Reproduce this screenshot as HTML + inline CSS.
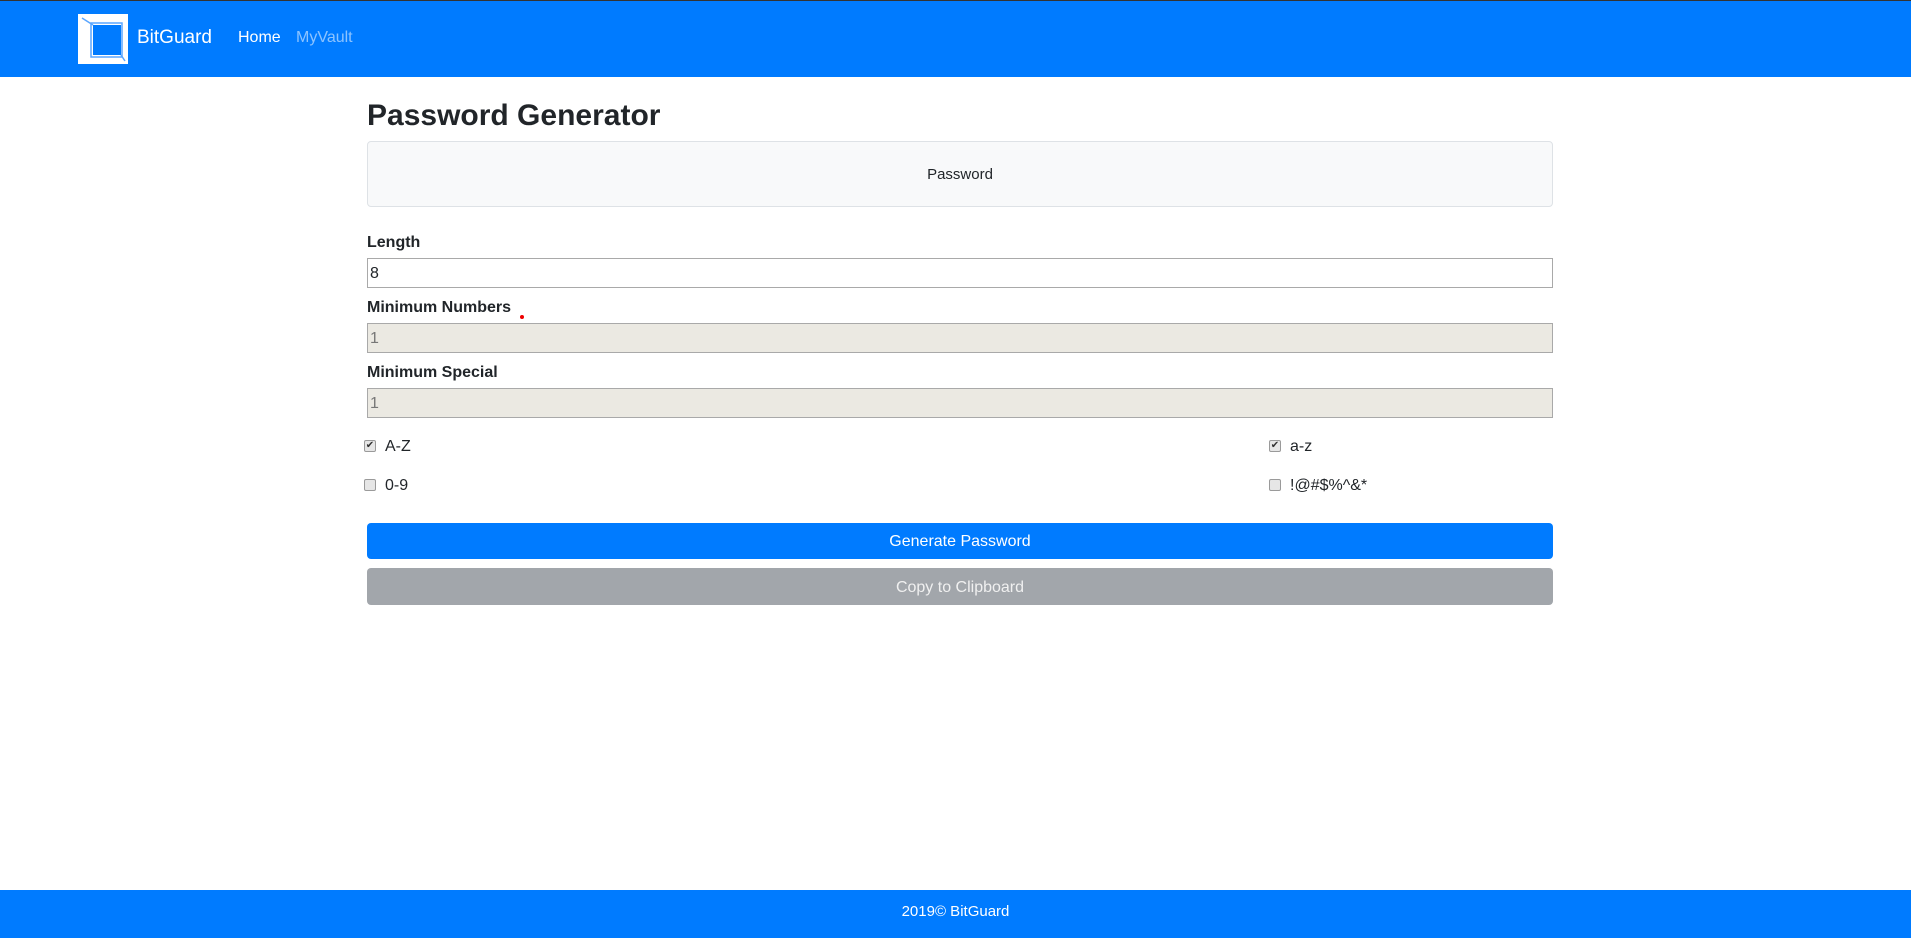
<!DOCTYPE html>
<html><head><meta charset="utf-8"><style>
*{box-sizing:border-box;margin:0;padding:0}
body{width:1911px;height:938px;position:relative;font-family:"Liberation Sans",sans-serif;color:#212529;background:#fff;overflow:hidden}
.nav{position:absolute;left:0;top:0;width:1911px;height:77px;background:#007bff;border-top:1px solid #333}
.abs{position:absolute}
.lbl{position:absolute;left:367px;font-size:16px;font-weight:bold;color:#212529}
.inp{position:absolute;left:367px;width:1186px;height:30px;border:1px solid #a9a9a9;font-size:16px;padding-left:2px;line-height:30px}
.dis{background:#ebe9e2;color:#777}
.cb{position:absolute;width:12px;height:12px;border:1px solid #9a9a9a;border-radius:2px;background:#e6e6e6;font-size:10px;line-height:10px;text-align:center;color:#333}
.ct{position:absolute;font-size:16px}
.btn{position:absolute;left:367px;width:1186px;border-radius:4px;color:#fff;font-size:16px;text-align:center}
</style></head><body>
<div class="nav">
 <svg class="abs" style="left:78px;top:13px" width="50" height="50" viewBox="0 0 50 50">
  <rect x="0" y="0" width="50" height="50" fill="#fff"/>
  <rect x="15" y="11" width="28" height="30" fill="#007bff"/>
  <path d="M4 4 L15 11 M43 41 L47 47" stroke="#5aa6ff" stroke-width="1.5"/>
  <rect x="13" y="9" width="31" height="34" fill="none" stroke="#5aa6ff" stroke-width="1.5"/>
 </svg>
 <div class="abs" style="left:137px;top:26px;font-size:19px;color:#fff">BitGuard</div>
 <div class="abs" style="left:238px;top:28px;font-size:16px;color:#fff">Home</div>
 <div class="abs" style="left:296px;top:28px;font-size:16px;color:rgba(255,255,255,.55)">MyVault</div>
</div>
<div class="abs" style="left:367px;top:99px;font-size:30px;font-weight:bold;color:#212529">Password Generator</div>
<div class="abs" style="left:367px;top:141px;width:1186px;height:66px;background:#f8f9fa;border:1px solid #dee2e6;border-radius:4px;text-align:center;line-height:66px;font-size:15px">Password</div>
<div class="lbl" style="top:234px">Length</div>
<div class="inp" style="top:258px">8</div>
<div class="lbl" style="top:299px">Minimum Numbers</div>
<div class="abs" style="left:520px;top:315px;width:4px;height:4px;border-radius:2px;background:#e00"></div>
<div class="inp dis" style="top:323px">1</div>
<div class="lbl" style="top:364px">Minimum Special</div>
<div class="inp dis" style="top:388px">1</div>
<div class="cb" style="left:364px;top:440px">✔</div><div class="ct" style="left:385px;top:438px">A-Z</div>
<div class="cb" style="left:364px;top:479px"></div><div class="ct" style="left:385px;top:477px">0-9</div>
<div class="cb" style="left:1269px;top:440px">✔</div><div class="ct" style="left:1290px;top:438px">a-z</div>
<div class="cb" style="left:1269px;top:479px"></div><div class="ct" style="left:1290px;top:477px">!@#$%^&amp;*</div>
<div class="btn" style="top:523px;height:36px;line-height:38px;background:#007bff">Generate Password</div>
<div class="btn" style="top:568px;height:37px;line-height:39px;background:#a2a6ab;color:#f0f0f0">Copy to Clipboard</div>
<div class="abs" style="left:0;top:890px;width:1911px;height:48px;background:#007bff;color:#fff;text-align:center;line-height:44px;font-size:15px">2019© BitGuard</div>
</body></html>
